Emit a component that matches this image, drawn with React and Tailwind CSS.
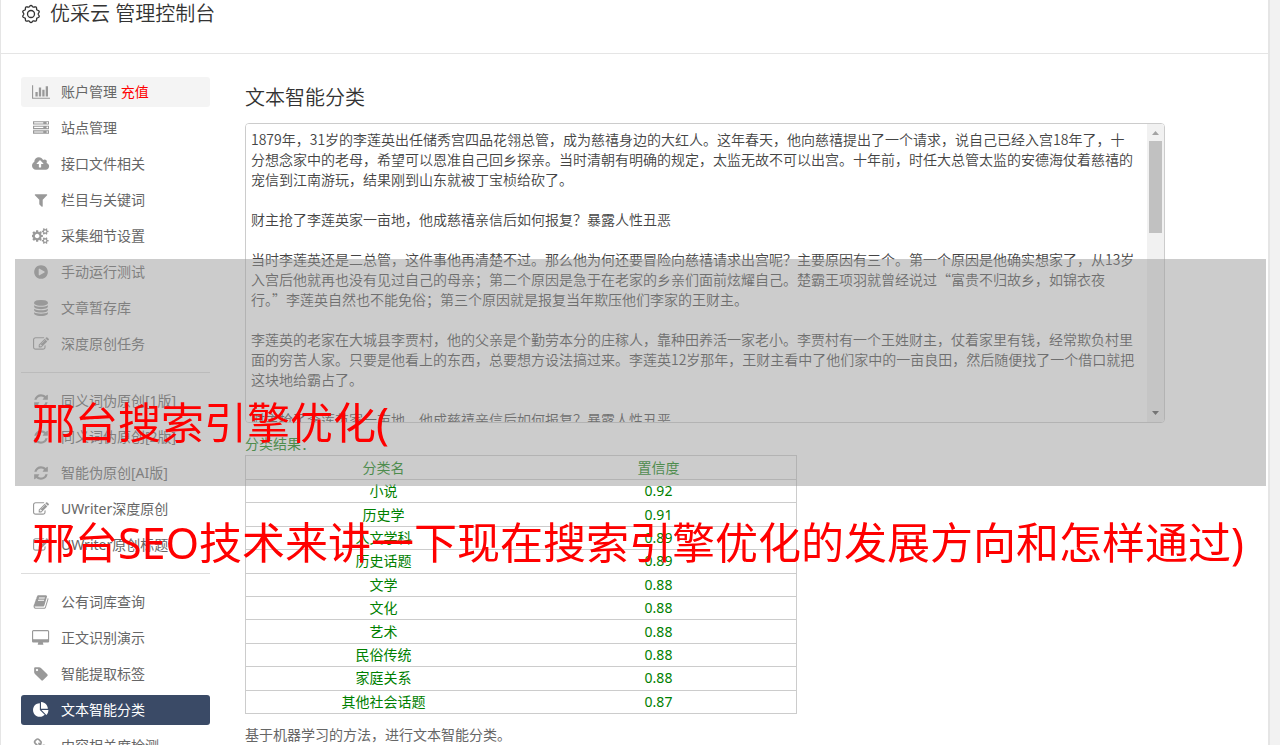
import React from "react";

const icons = {
  chart: [2048, "M640 896v512h-256v-512h256zm384-512v1024h-256v-1024h256zm1024 1152v128h-2048v-1536h128v1408h1920zm-640-896v768h-256v-768h256zm384-384v1152h-256v-1152h256z"],
  server: [1792, "M128 1408h1024v-128h-1024v128zm0-512h1024v-128h-1024v128zm1568 448q0-40-28-68t-68-28-68 28-28 68 28 68 68 28 68-28 28-68zm-1568-960h1024v-128h-1024v128zm1568 448q0-40-28-68t-68-28-68 28-28 68 28 68 68 28 68-28 28-68zm0-512q0-40-28-68t-68-28-68 28-28 68 28 68 68 28 68-28 28-68zm96 832v384h-1792v-384h1792zm0-512v384h-1792v-384h1792zm0-512v384h-1792v-384h1792z"],
  cloud: [1920, "M1280 864q0-14-9-23l-352-352q-9-9-23-9t-23 9l-351 351q-10 12-10 24 0 14 9 23t23 9h224v352q0 13 9.5 22.5t22.5 9.5h192q13 0 22.5-9.5t9.5-22.5v-352h224q13 0 22.5-9.5t9.5-22.5zm640 288q0 159-112.5 271.5t-271.5 112.5h-1088q-185 0-316.5-131.5t-131.5-316.5q0-130 70-240t188-165q-2-30-2-43 0-212 150-362t362-150q156 0 285.5 87t188.5 231q71-62 166-62 106 0 181 75t75 181q0 76-41 138 130 31 213.5 135.5t83.5 238.5z"],
  filter: [1792, "M1595 295q17 41-14 70l-493 493v742q0 42-39 59-13 5-25 5-27 0-45-19l-256-256q-19-19-19-45v-486l-493-493q-31-29-14-70 17-39 59-39h1280q42 0 59 39z"],
  cogs: [1920, "M832 896q0-106-75-181t-181-75-181 75-75 181 75 181 181 75 181-75 75-181zm768 512q0-52-38-90t-90-38-90 38-38 90q0 53 37.5 90.5t90.5 37.5 90.5-37.5 37.5-90.5zm0-1024q0-52-38-90t-90-38-90 38-38 90q0 53 37.5 90.5t90.5 37.5 90.5-37.5 37.5-90.5zm-384 421v185q0 10-7 19.5t-16 10.5l-155 24q-11 35-32 76 34 48 90 115 7 11 7 20 0 12-7 19-23 30-82.5 89.5t-78.5 59.5q-11 0-21-7l-115-90q-37 19-77 31-11 108-23 155-7 24-30 24h-186q-11 0-20-7.5t-10-17.5l-23-153q-34-10-75-31l-118 89q-7 7-20 7-11 0-21-8-144-133-144-160 0-9 7-19 10-14 41-53t47-61q-23-44-35-82l-152-24q-10-1-17-9.5t-7-19.5v-185q0-10 7-19.5t16-10.5l155-24q11-35 32-76-34-48-90-115-7-11-7-20 0-12 7-20 22-30 82-89t79-59q11 0 21 7l115 90q34-18 77-32 11-108 23-154 7-24 30-24h186q11 0 20 7.5t10 17.5l23 153q34 10 75 31l118-89q8-7 20-7 11 0 21 8 144 133 144 160 0 8-7 19-12 16-42 54t-45 60q23 48 34 82l152 23q10 2 17 10.5t7 19.5zm640 533v140q0 16-149 31-12 27-30 52 51 113 51 138 0 4-4 7-122 71-124 71-8 0-46-47t-52-68q-20 2-30 2t-30-2q-14 21-52 68t-46 47q-2 0-124-71-4-3-4-7 0-25 51-138-18-25-30-52-149-15-149-31v-140q0-16 149-31 13-29 30-52-51-113-51-138 0-4 4-7 4-2 35-20t59-34 30-16q8 0 46 46.5t52 67.5q20-2 30-2t30 2q51-71 92-112l6-2q4 0 124 70 4 3 4 7 0 25-51 138 17 23 30 52 149 15 149 31zm0-1024v140q0 16-149 31-12 27-30 52 51 113 51 138 0 4-4 7-122 71-124 71-8 0-46-47t-52-68q-20 2-30 2t-30-2q-14 21-52 68t-46 47q-2 0-124-71-4-3-4-7 0-25 51-138-18-25-30-52-149-15-149-31v-140q0-16 149-31 13-29 30-52-51-113-51-138 0-4 4-7 4-2 35-20t59-34 30-16q8 0 46 46.5t52 67.5q20-2 30-2t30 2q51-71 92-112l6-2q4 0 124 70 4 3 4 7 0 25-51 138 17 23 30 52 149 15 149 31z"],
  play: [1792, "M896 128q209 0 385.5 103t279.5 279.5 103 385.5-103 385.5-279.5 279.5-385.5 103-385.5-103-279.5-279.5-103-385.5 103-385.5 279.5-279.5 385.5-103zm384 823q32-18 32-55t-32-55l-544-320q-31-19-64-1-32 19-32 56v640q0 37 32 56 16 8 32 8 17 0 32-9z"],
  database: [1792, "M896 768q237 0 443-43t325-127v170q0 69-103 128t-280 93.5-385 34.5-385-34.5-280-93.5-103-128v-170q119 84 325 127t443 43zm0 768q237 0 443-43t325-127v170q0 69-103 128t-280 93.5-385 34.5-385-34.5-280-93.5-103-128v-170q119 84 325 127t443 43zm0-384q237 0 443-43t325-127v170q0 69-103 128t-280 93.5-385 34.5-385-34.5-280-93.5-103-128v-170q119 84 325 127t443 43zm0-1152q208 0 385 34.5t280 93.5 103 128v128q0 69-103 128t-280 93.5-385 34.5-385-34.5-280-93.5-103-128v-128q0-69 103-128t280-93.5 385-34.5z"],
  edit: [1792, "M888 1184l116-116-152-152-116 116v56h96v96h56zm440-720q-16-16-33 1l-350 350q-17 17-1 33t33-1l350-350q17-17 1-33zm80 594v190q0 119-84.5 203.5t-203.5 84.5h-832q-119 0-203.5-84.5t-84.5-203.5v-832q0-119 84.5-203.5t203.5-84.5h832q63 0 117 25 15 7 18 23 3 17-9 29l-49 49q-14 14-32 8-23-6-45-6h-832q-66 0-113 47t-47 113v832q0 66 47 113t113 47h832q66 0 113-47t47-113v-126q0-13 9-22l64-64q15-15 35-7t20 29zm-96-738l288 288-672 672h-288v-288zm444 132l-92 92-288-288 92-92q28-28 68-28t68 28l152 152q28 28 28 68t-28 68z"],
  refresh: [1792, "M1639 1056q0 5-1 7-64 268-268 434.5t-478 166.5q-146 0-282.5-55t-243.5-157l-129 129q-19 19-45 19t-45-19-19-45v-448q0-26 19-45t45-19h448q26 0 45 19t19 45-19 45l-137 137q71 66 161 102t187 36q134 0 250-65t186-179q11-17 53-117 8-23 30-23h192q13 0 22.5 9.5t9.5 22.5zm25-800v448q0 26-19 45t-45 19h-448q-26 0-45-19t-19-45 19-45l138-138q-148-137-349-137-134 0-250 65t-186 179q-11 17-53 117-8 23-30 23h-199q-13 0-22.5-9.5t-9.5-22.5v-7q65-268 270-434.5t480-166.5q146 0 284 55.5t245 156.5l130-129q19-19 45-19t45 19 19 45z"],
  book: [1792, "M1703 478q40 57 18 129l-275 906q-19 64-76.5 107.5t-122.5 43.5h-923q-77 0-148.5-53.5t-99.5-131.5q-24-67-2-127 0-4 3-27t4-37q1-8-3-21.5t-3-19.5q2-11 8-21t16.5-23.5 16.5-23.5q23-38 45-91.5t30-91.5q3-10 .5-30t-.5-28q3-11 17-28t17-23q21-36 42-92t25-90q1-9-2.5-32t.5-28q4-13 22-30.5t22-22.5q19-26 42.5-84.5t27.5-96.5q1-8-3-25.5t-2-26.5q2-8 9-18t18-23 17-21q8-12 16.5-30.5t15-35 16-36 19.5-32 26.5-23.5 36-11.5 47.5 5.5l-1 3q38-9 51-9h761q74 0 114 56t18 130l-274 906q-36 119-71.5 153.5t-128.5 34.5h-869q-27 0-38 15-11 16-1 43 24 70 144 70h923q29 0 56-15.5t35-41.5l300-987q7-22 5-57 38 15 59 43zm-1064 2q-4 13 2 22.5t20 9.5h608q13 0 25.5-9.5t16.5-22.5l21-64q4-13-2-22.5t-20-9.5h-608q-13 0-25.5 9.5t-16.5 22.5zm-83 256q-4 13 2 22.5t20 9.5h608q13 0 25.5-9.5t16.5-22.5l21-64q4-13-2-22.5t-20-9.5h-608q-13 0-25.5 9.5t-16.5 22.5z"],
  desktop: [1920, "M1792 992v-832q0-13-9.5-22.5t-22.5-9.5h-1600q-13 0-22.5 9.5t-9.5 22.5v832q0 13 9.5 22.5t22.5 9.5h1600q13 0 22.5-9.5t9.5-22.5zm128-832v1088q0 66-47 113t-113 47h-544q0 37 16 77.5t32 71 16 43.5q0 26-19 45t-45 19h-512q-26 0-45-19t-19-45q0-14 16-44t32-70 16-78h-544q-66 0-113-47t-47-113v-1088q0-66 47-113t113-47h1600q66 0 113 47t47 113z"],
  tag: [1792, "M576 448q0-53-37.5-90.5t-90.5-37.5-90.5 37.5-37.5 90.5 37.5 90.5 90.5 37.5 90.5-37.5 37.5-90.5zm1067 576q0 53-37 90l-491 492q-39 37-91 37-53 0-90-37l-715-716q-38-37-64.5-101t-26.5-117v-416q0-52 38-90t90-38h416q53 0 117 26.5t102 64.5l715 714q37 39 37 91z"],
  pie: [1792, "M768 890l546 546q-106 108-247.5 168t-298.5 60q-209 0-385.5-103t-279.5-279.5-103-385.5 103-385.5 279.5-279.5 385.5-103v762zm187 6h773q0 157-60 298.5t-168 247.5zm709-128h-768v-768q209 0 385.5 103t279.5 279.5 103 385.5z"],
  link: [1792, "M1520 1216q0-40-28-68l-208-208q-28-28-68-28-42 0-72 32 3 3 19 18.5t21.5 21.5 15 19 13 25.5 3.5 27.5q0 40-28 68t-68 28q-15 0-27.5-3.5t-25.5-13-19-15-21.5-21.5-18.5-19q-33 31-33 73 0 40 28 68l206 207q27 27 68 27 40 0 68-26l147-146q28-28 28-67zm-703-705q0-40-28-68l-206-207q-28-28-68-28-39 0-68 27l-147 146q-28 28-28 67 0 40 28 68l208 208q27 27 68 27 42 0 72-31-3-3-19-18.5t-21.5-21.5-15-19-13-25.5-3.5-27.5q0-40 28-68t68-28q15 0 27.5 3.5t25.5 13 19 15 21.5 21.5 18.5 19q33-31 33-73zm895 705q0 120-85 203l-147 146q-83 83-203 83-121 0-204-85l-206-207q-83-83-83-203 0-123 88-209l-88-88q-86 88-208 88-120 0-204-84l-208-208q-84-84-84-204t85-203l147-146q83-83 203-83 121 0 204 85l206 207q83 83 83 203 0 123-88 209l88 88q86-88 208-88 120 0 204 84l208 208q84 84 84 204z"],
};

const groups = [
  [
    ["chart", "账户管理", "充值"],
    ["server", "站点管理"],
    ["cloud", "接口文件相关"],
    ["filter", "栏目与关键词"],
    ["cogs", "采集细节设置"],
    ["play", "手动运行测试"],
    ["database", "文章暂存库"],
    ["edit", "深度原创任务"],
  ],
  [
    ["refresh", "同义词伪原创[1版]"],
    ["refresh", "同义词伪原创[2版]"],
    ["refresh", "智能伪原创[AI版]"],
    ["edit", "UWriter深度原创"],
    ["edit", "UWriter原创标题"],
  ],
  [
    ["book", "公有词库查询"],
    ["desktop", "正文识别演示"],
    ["tag", "智能提取标签"],
    ["pie", "文本智能分类"],
    ["link", "内容相关度检测"],
  ],
];

const rows = [
  ["小说", "0.92"],
  ["历史学", "0.91"],
  ["人文学科", "0.89"],
  ["历史话题", "0.89"],
  ["文学", "0.88"],
  ["文化", "0.88"],
  ["艺术", "0.88"],
  ["民俗传统", "0.88"],
  ["家庭关系", "0.88"],
  ["其他社会话题", "0.87"],
];

const headline = "财主抢了李莲英家一亩地，他成慈禧亲信后如何报复？暴露人性丑恶";
const article = [
  "1879年，31岁的李莲英出任储秀宫四品花翎总管，成为慈禧身边的大红人。这年春天，他向慈禧提出了一个请求，说自己已经入宫18年了，十分想念家中的老母，希望可以恩准自己回乡探亲。当时清朝有明确的规定，太监无故不可以出宫。十年前，时任大总管太监的安德海仗着慈禧的宠信到江南游玩，结果刚到山东就被丁宝桢给砍了。",
  headline,
  "当时李莲英还是二总管，这件事他再清楚不过。那么他为何还要冒险向慈禧请求出宫呢？主要原因有三个。第一个原因是他确实想家了，从13岁入宫后他就再也没有见过自己的母亲；第二个原因是急于在老家的乡亲们面前炫耀自己。楚霸王项羽就曾经说过“富贵不归故乡，如锦衣夜行。”李莲英自然也不能免俗；第三个原因就是报复当年欺压他们李家的王财主。",
  "李莲英的老家在大城县李贾村，他的父亲是个勤劳本分的庄稼人，靠种田养活一家老小。李贾村有一个王姓财主，仗着家里有钱，经常欺负村里面的穷苦人家。只要是他看上的东西，总要想方设法搞过来。李莲英12岁那年，王财主看中了他们家中的一亩良田，然后随便找了一个借口就把这块地给霸占了。",
  headline,
].join("\n\n");

function Icon({ name }) {
  const [width, d] = icons[name];
  return (
    <svg viewBox={`0 0 ${width} 1792`} className="h-4 w-auto" fill="currentColor" aria-hidden="true">
      <path d={d} />
    </svg>
  );
}

function NavItem({ item }) {
  const [icon, label, extra] = item;
  const active = icon === "pie";
  const tone = active
    ? "bg-[#3a4a66] text-white"
    : extra
      ? "bg-[#f4f4f4] text-[#666]"
      : "text-[#666]";
  return (
    <li>
      <a href="#" className={`flex h-[30px] items-center gap-[10px] rounded-[3px] pl-[10px] ${tone}`}>
        <span className={`flex w-5 justify-center ${active ? "text-white" : "text-[#999]"}`}>
          <Icon name={icon} />
        </span>
        <span className="whitespace-nowrap">
          {label}
          {extra && <span className="text-[#f00]"> {extra}</span>}
        </span>
      </a>
    </li>
  );
}

function Gear() {
  const points = [];
  for (let i = 0; i < 96; i++) {
    const a = (i / 96) * Math.PI * 2;
    const r = 7.9 + 0.7 * Math.cos(a * 10);
    points.push(`${(10 + r * Math.sin(a)).toFixed(2)},${(10 - r * Math.cos(a)).toFixed(2)}`);
  }
  return (
    <svg viewBox="0 0 20 20" className="size-5" fill="none" stroke="currentColor" strokeWidth="1.3" aria-hidden="true">
      <polygon points={points.join(" ")} />
      <circle cx="10" cy="10" r="3.5" />
    </svg>
  );
}

function ScrollTrack() {
  return (
    <div
      aria-hidden="true"
      className="pointer-events-none absolute inset-y-px right-px flex w-[17px] flex-col items-center rounded-r-[3px] bg-[#f1f1f1]"
    >
      <svg viewBox="0 0 17 17" className="size-[17px] text-[#a3a3a3]" fill="currentColor">
        <path d="M5 11L8.500 7L12 11z" />
      </svg>
      <div className="h-[92px] w-[13px] bg-[#c1c1c1]" />
      <svg viewBox="0 0 17 17" className="mt-auto size-[17px] text-[#505050]" fill="currentColor">
        <path d="M5 6L8.500 10L12 6z" />
      </svg>
    </div>
  );
}

export default function App() {
  return (
    <div className="relative h-screen overflow-hidden bg-[#f2f2f2] pr-[10px] font-['Noto_Sans','Noto_Sans_CJK_SC',sans-serif] text-sm leading-5 text-[#666]">
      <div className="min-h-full border-r-2 border-l border-[#e5e5e5] bg-white">
        <header className="flex h-[54px] items-start border-b border-[#e5e5e5] pl-5 text-[#333]">
          <h1 className="flex h-7 items-center gap-[9px] text-xl font-[350]">
            <Gear />
            优采云 管理控制台
          </h1>
        </header>
        <div className="flex gap-[35px] pt-[23px] pr-[103px] pl-5">
          <nav className="w-[189px] shrink-0">
            {groups.map((items, i) => (
              <ul
                key={i}
                className={`flex flex-col gap-[6px] ${i ? "mt-[13px] border-t border-[#ddd] pt-[13px]" : ""}`}
              >
                {items.map((item) => (
                  <NavItem key={item[1]} item={item} />
                ))}
              </ul>
            ))}
          </nav>
          <main className="min-w-0 flex-1">
            <h2 className="flex h-[46px] items-center pb-1 text-xl font-[350] text-[#333]">
              <label htmlFor="source">文本智能分类</label>
            </h2>
            <div className="relative">
              <textarea
                id="source"
                defaultValue={article}
                className="block h-[300px] w-full resize-none overflow-y-scroll rounded-[4px] border border-[#ccc] bg-white py-[5px] pr-7 pl-[5px] font-['Noto_Sans_CJK_SC',sans-serif] leading-5 font-[350] text-[#444] [scrollbar-width:none]"
              />
              <ScrollTrack />
            </div>
            <p className="mt-[11px] text-[#008000]">分类结果：</p>
            <table className="mt-px h-[259px] w-[552px] border-collapse text-center leading-5 text-[#008000]">
              <thead>
                <tr className="h-6">
                  <th className="w-1/2 border-y border-l border-[#ccc] p-0 font-normal">分类名</th>
                  <th className="w-1/2 border-y border-r border-[#ccc] p-0 font-normal">置信度</th>
                </tr>
              </thead>
              <tbody>
                {rows.map(([name, score]) => (
                  <tr key={name}>
                    <td className="border-y border-l border-[#ccc] p-0">{name}</td>
                    <td className="border-y border-r border-[#ccc] p-0">{score}</td>
                  </tr>
                ))}
              </tbody>
            </table>
            <p className="mt-[11px]">基于机器学习的方法，进行文本智能分类。</p>
          </main>
        </div>
      </div>
      <div className="pointer-events-none absolute top-[259px] right-[14px] left-[15px] h-[227px] bg-[#999]/50" />
      <div className="pointer-events-none absolute top-[363px] left-8 text-[43px] leading-[120px] whitespace-nowrap text-[#f00]">
        <p>邢台搜索引擎优化(</p>
        <p>邢台SEO技术来讲一下现在搜索引擎优化的发展方向和怎样通过)</p>
      </div>
    </div>
  );
}
